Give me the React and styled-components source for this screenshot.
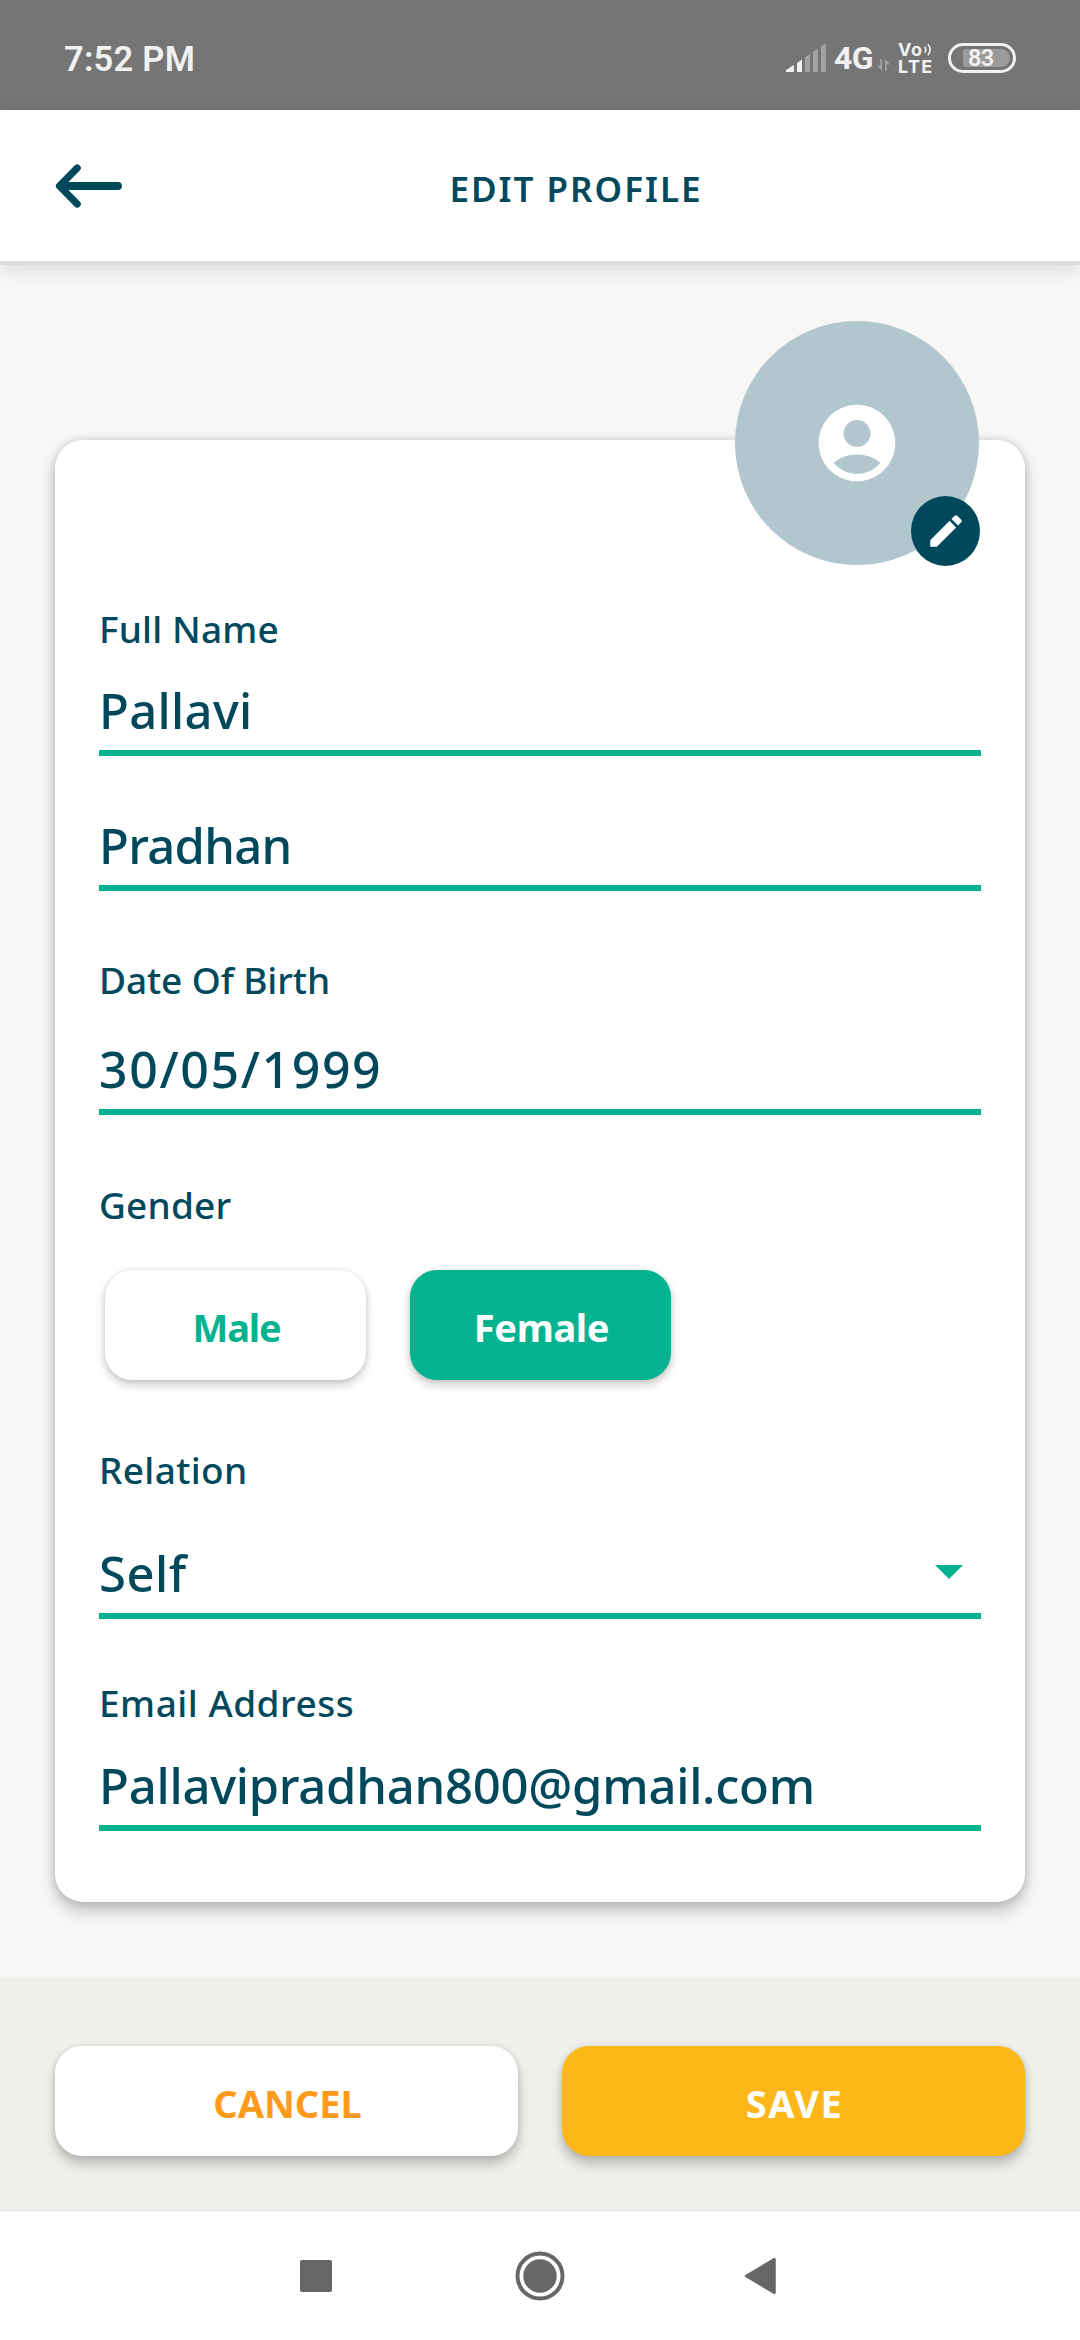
import React from "react";
import styled, { createGlobalStyle } from "styled-components";
import { MdAccountCircle, MdEdit } from "react-icons/md";

const color = {
  navy: "#00495d",
  green: "#03b38f",
  amber: "#fdb718",
  orange: "#ff9b1a",
  statusInk: "#f1f1f1",
  statusDim: "#a2a2a2",
  navKey: "#666666",
};

const GlobalStyle = createGlobalStyle`
  *, *::before, *::after { box-sizing: border-box; }
  body {
    margin: 0;
    background: #f7f7f5;
    font-family: "Noto Sans", "Open Sans", sans-serif;
    color: ${color.navy};
  }
`;

const Screen = styled.div`
  display: flex;
  flex-direction: column;
  width: 1080px;
  height: 2340px;
  overflow: hidden;
  background: #f7f7f5;
`;

/* ---------- status bar ---------- */

const StatusBar = styled.div`
  display: flex;
  flex: none;
  align-items: center;
  justify-content: space-between;
  height: 110px;
  padding: 6px 64px 0;
  background: #757575;
  color: ${color.statusInk};
  font-family: Roboto, sans-serif;
`;

const Clock = styled.span`
  padding-top: 1px;
  font-size: 34.5px;
  font-weight: 600;
  letter-spacing: 0.25px;
`;

const StatusIcons = styled.div`
  display: flex;
  align-items: center;
`;

const Network = styled.span`
  width: 39px;
  margin-left: 8px;
  font-size: 32px;
  font-weight: 700;
  letter-spacing: -0.5px;
  white-space: nowrap;
`;

const DataArrows = styled.svg`
  margin: 14px 8px 0 4px;
`;

const VoLte = styled.div`
  display: flex;
  flex-direction: column;
  justify-content: space-between;
  width: 34px;
  height: 30px;
  font-family: Inter, sans-serif;
  font-size: 18px;
  font-weight: 700;
  line-height: 13px;
`;

const VoRow = styled.div`
  display: flex;
  align-items: center;
  gap: 1px;
  letter-spacing: 0.6px;
`;

const LteRow = styled.span`
  letter-spacing: 1.4px;
`;

const Battery = styled.div`
  display: flex;
  width: 68px;
  height: 30px;
  margin-left: 16px;
  padding: 3px 3px 3px 12px;
  border: 3px solid ${color.statusInk};
  border-radius: 15px;
`;

const BatteryLevel = styled.div`
  display: flex;
  align-items: center;
  width: 47px;
  height: 18px;
  padding-left: 5px;
  border-radius: 2px 9px 9px 2px;
  background: #9b9b9b;
  font-size: 23.5px;
  font-weight: 600;
  letter-spacing: -0.8px;
  line-height: 18px;
`;

/* ---------- app header ---------- */

const Header = styled.header`
  display: flex;
  flex: none;
  align-items: center;
  height: 151px;
  padding: 0 50px 0 55px;
  background: #ffffff;
  box-shadow: 0 4px 0 0 #dcdcdb, 0 8px 20px rgba(0, 0, 0, 0.12);
`;

const Title = styled.h1`
  flex: 1;
  margin: 0;
  padding-top: 6px;
  font-size: 35px;
  font-weight: 600;
  letter-spacing: 2px;
  text-align: center;
`;

/* ---------- profile card ---------- */

const Main = styled.main`
  flex: 1;
  padding: 179px 55px 0;
`;

const Card = styled.section`
  position: relative;
  height: 1462px;
  padding: 166px 44px 0;
  border-radius: 28px;
  background: #ffffff;
  box-shadow: 0 9px 16px rgba(0, 0, 0, 0.22), 0 0 10px rgba(0, 0, 0, 0.15);
`;

const Avatar = styled.div`
  position: absolute;
  top: -119px;
  right: 46px;
  display: flex;
  align-items: center;
  justify-content: center;
  width: 244px;
  height: 244px;
  border-radius: 50%;
  background: #b2c6ce;
  color: #ffffff;
`;

const EditBadge = styled.div`
  position: absolute;
  right: -1px;
  bottom: -1px;
  display: flex;
  align-items: center;
  justify-content: center;
  width: 69px;
  height: 70px;
  border-radius: 50%;
  background: ${color.navy};
`;

const Field = styled.div`
  margin-top: ${(p) => p.$space || 0}px;
`;

const Label = styled.div`
  font-size: 37px;
  font-weight: 500;
  line-height: 46px;
  letter-spacing: ${(p) => p.$track || 0}px;
`;

const Value = styled.div`
  display: flex;
  align-items: center;
  justify-content: space-between;
  height: 74px;
  margin-top: ${(p) => p.$gap || 0}px;
  padding-bottom: 12px;
  border-bottom: 6px solid ${color.green};
  font-size: ${(p) => p.$size || 49}px;
  font-weight: 500;
  line-height: 56px;
  letter-spacing: ${(p) => p.$track || 0}px;
`;

const Caret = styled.svg`
  margin: 0 18px 3px 0;
`;

const GenderRow = styled.div`
  display: flex;
  gap: 44px;
  margin-top: 42px;
  padding-left: 6px;
`;

const Button = styled.div`
  display: flex;
  align-items: center;
  justify-content: center;
  height: 110px;
  padding: 4px 0 0 2px;
  border-radius: 27px;
  font-size: 38px;
  font-weight: 700;
  letter-spacing: ${(p) => p.$track || 0}px;
`;

const GenderButton = styled(Button)`
  width: 261px;
  background: ${(p) => (p.$selected ? color.green : "#ffffff")};
  color: ${(p) => (p.$selected ? "#ffffff" : color.green)};
  box-shadow: 0 5px 10px rgba(0, 0, 0, 0.2), 0 0 5px rgba(0, 0, 0, 0.1);
`;

/* ---------- footer ---------- */

const Footer = styled.footer`
  display: flex;
  flex: none;
  gap: 44px;
  height: 232px;
  padding: 68px 55px 0;
  background: #eff0eb;
`;

const FooterButton = styled(Button)`
  flex: 1;
  background: ${(p) => (p.$primary ? color.amber : "#ffffff")};
  color: ${(p) => (p.$primary ? "#ffffff" : color.orange)};
  box-shadow: 0 8px 12px rgba(0, 0, 0, 0.22), 0 0 6px rgba(0, 0, 0, 0.1);
`;

const NavBar = styled.nav`
  display: flex;
  flex: none;
  align-items: center;
  justify-content: center;
  gap: 170px;
  height: 130px;
  border-top: 1px solid #e0e0de;
  background: #ffffff;
`;

function SignalIcon() {
  return (
    <svg width="40" height="30" viewBox="0 0 40 30">
      <g fill={color.statusInk}>
        <path d="M0 29v-1.500Q0 27 .6 26.700L7.200 22.300Q8 22 8 22.800V28q0 1-1 1z" />
        <path d="M11 29V20l5-3.400V28q0 1-1 1z" />
      </g>
      <g fill={color.statusDim}>
        <path d="M19 29V14.500l5-3.400V28q0 1-1 1z" />
        <path d="M27 29V9l5-3.400V28q0 1-1 1z" />
        <path d="M35 29V3.500L40 0V28q0 1-1 1z" />
      </g>
    </svg>
  );
}

function SoundWaves() {
  return (
    <svg width="9" height="13" viewBox="0 0 9 13" fill="none" stroke={color.statusInk} strokeWidth="1.7" strokeLinecap="round">
      <path d="M1.200 4Q2.800 6.500 1.200 9.300" />
      <path d="M4.500 1.500Q8.800 6.500 4.500 12" />
    </svg>
  );
}

export default function App() {
  return (
    <>
      <GlobalStyle />
      <Screen>
        <StatusBar>
          <Clock>7:52 PM</Clock>
          <StatusIcons>
            <SignalIcon />
            <Network>4G</Network>
            <DataArrows width="13" height="12" viewBox="0 0 13 12" fill={color.statusDim}>
              <path d="M3.200 0H5v12L0 6.500h3.200z" />
              <path d="M8 0l5 5.500H9.800V12H8z" />
            </DataArrows>
            <VoLte>
              <VoRow>
                Vo
                <SoundWaves />
              </VoRow>
              <LteRow>LTE</LteRow>
            </VoLte>
            <Battery>
              <BatteryLevel>83</BatteryLevel>
            </Battery>
          </StatusIcons>
        </StatusBar>

        <Header>
          <svg width="67" height="46" viewBox="0 0 67 46" fill="none" stroke={color.navy} strokeLinecap="round" strokeLinejoin="round">
            <path d="M6 23H63" strokeWidth="7.800" />
            <path d="M22.200 5L4.500 23L22.200 41" strokeWidth="7.200" />
          </svg>
          <Title>EDIT PROFILE</Title>
        </Header>

        <Main>
          <Card>
            <Avatar>
              <MdAccountCircle size={92} />
              <EditBadge>
                <MdEdit size={42} />
              </EditBadge>
            </Avatar>

            <Field>
              <Label $track={0.15}>Full Name</Label>
              <Value $gap={30} $track={0.3}>Pallavi</Value>
            </Field>
            <Field $space={61}>
              <Value $track={-0.7}>Pradhan</Value>
            </Field>
            <Field $space={66}>
              <Label $track={-0.1}>Date Of Birth</Label>
              <Value $gap={38} $size={50} $track={1.6}>30/05/1999</Value>
            </Field>
            <Field $space={67}>
              <Label $track={0.2}>Gender</Label>
              <GenderRow>
                <GenderButton $track={-1.2}>Male</GenderButton>
                <GenderButton $selected $track={-0.35}>Female</GenderButton>
              </GenderRow>
            </Field>
            <Field $space={67}>
              <Label $track={0.35}>Relation</Label>
              <Value $gap={52} $track={0.5}>
                Self
                <Caret width="28" height="14" viewBox="0 0 28 14" fill={color.green}>
                  <path d="M0 0H28L14 14z" />
                </Caret>
              </Value>
            </Field>
            <Field $space={61}>
              <Label $track={0.5}>Email Address</Label>
              <Value $gap={31} $track={-0.25}>Pallavipradhan800@gmail.com</Value>
            </Field>
          </Card>
        </Main>

        <Footer>
          <FooterButton>CANCEL</FooterButton>
          <FooterButton $primary $track={1.4}>SAVE</FooterButton>
        </Footer>

        <NavBar>
          <svg width="48" height="50" viewBox="0 0 48 50" fill={color.navKey}>
            <rect x="3" y="9" width="32" height="32" rx="2" />
          </svg>
          <svg width="50" height="50" viewBox="0 0 50 50">
            <circle cx="25" cy="25" r="22.500" fill="none" stroke={color.navKey} strokeWidth="4" />
            <circle cx="25" cy="25" r="16.700" fill={color.navKey} />
          </svg>
          <svg width="48" height="50" viewBox="0 0 48 50" fill={color.navKey} stroke={color.navKey} strokeWidth="2.500" strokeLinejoin="round">
            <path d="M11 25L39.500 8.200V41.800z" />
          </svg>
        </NavBar>
      </Screen>
    </>
  );
}
